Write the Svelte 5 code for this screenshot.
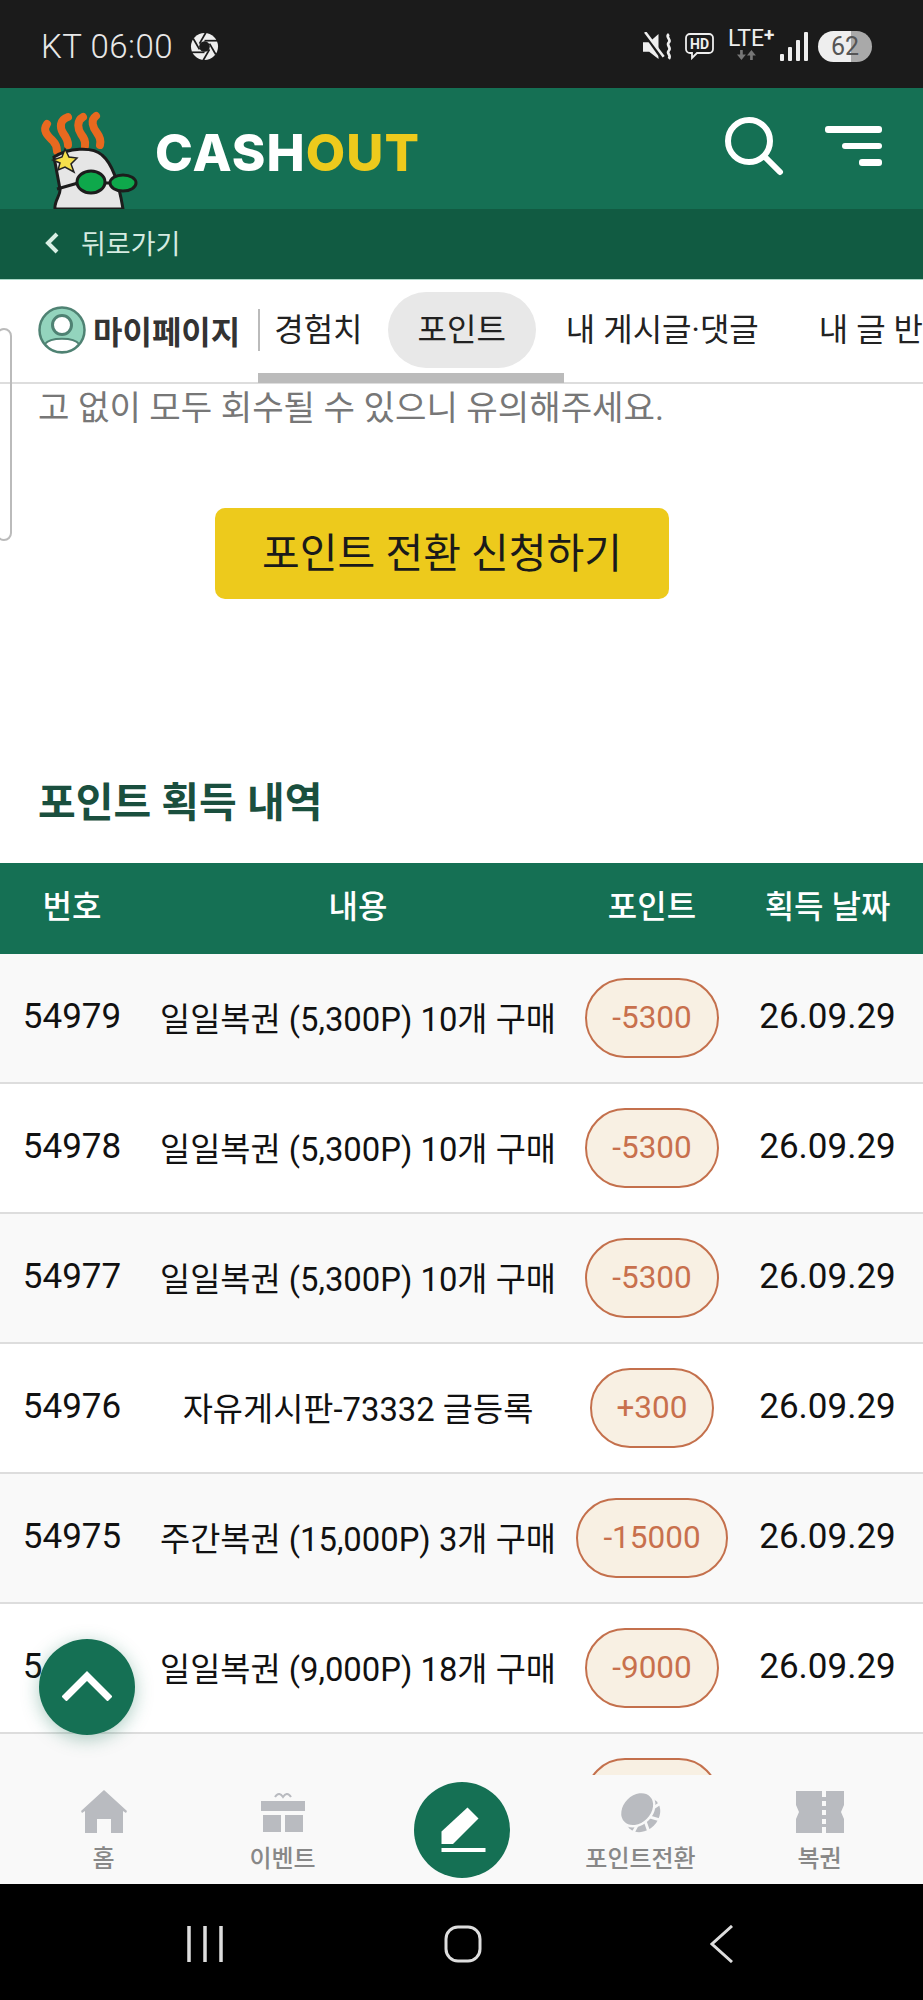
<script>
  const rows = [
    { no: '54979', text: '일일복권 (5,300P) 10개 구매', point: '-5300', date: '26.09.29' },
    { no: '54978', text: '일일복권 (5,300P) 10개 구매', point: '-5300', date: '26.09.29' },
    { no: '54977', text: '일일복권 (5,300P) 10개 구매', point: '-5300', date: '26.09.29' },
    { no: '54976', text: '자유게시판-73332 글등록', point: '+300', date: '26.09.29' },
    { no: '54975', text: '주간복권 (15,000P) 3개 구매', point: '-15000', date: '26.09.29' },
    { no: '54974', text: '일일복권 (9,000P) 18개 구매', point: '-9000', date: '26.09.29' },
    { no: '', text: '', point: '-5300', date: '' }
  ];
  const blades = [0, 60, 120, 180, 240, 300];
</script>

<div class="screen">
  <div class="status">
    <span class="clock">KT 06:00</span>
    <svg class="aperture" viewBox="0 0 30 30">
      <circle cx="15" cy="15" r="14" fill="#eee" />
      <circle cx="15" cy="15" r="5.5" fill="#1b1b1b" />
      {#each blades as a}
        <line x1="15" y1="9" x2="28" y2="9" stroke="#1b1b1b" stroke-width="1.8" transform="rotate({a} 15 15)" />
      {/each}
    </svg>
    <div class="status-right">
      <svg class="ico-mute" viewBox="0 0 30 28">
        <path d="M0 10h6l9-8v24l-9-7H0z" fill="#eee" />
        <path d="M1 1l17 24" stroke="#1b1b1b" stroke-width="3" />
        <path d="M2 0l18 24" stroke="#eee" stroke-width="2.5" />
        <path d="M25 2c-4 3 3 5 0 8s3 5 0 8 3 4 0 8" fill="none" stroke="#eee" stroke-width="2.6" />
      </svg>
      <svg class="ico-hd" viewBox="0 0 31 28">
        <path d="M6 2h19a4 4 0 0 1 4 4v11a4 4 0 0 1-4 4H13l-5 5v-5H6a4 4 0 0 1-4-4V6a4 4 0 0 1 4-4z" fill="none" stroke="#eee" stroke-width="1.8" />
        <text x="15.5" y="17" class="hd-text">HD</text>
      </svg>
      <div class="lte">
        <span>LTE<sup>+</sup></span>
        <svg viewBox="0 0 18 9" class="arrows">
          <path d="M4 9L0 4h2.8V0h2.4v4H8zM13 0l4 5h-2.8v4h-2.4V5H9z" fill="#777" />
        </svg>
      </div>
      <svg class="ico-signal" viewBox="0 0 28 29">
        <rect x="0" y="22" width="4" height="7" rx="1" fill="#eee" />
        <rect x="8" y="15" width="4" height="14" rx="1" fill="#eee" />
        <rect x="16" y="8" width="4" height="21" rx="1" fill="#eee" />
        <rect x="24" y="0" width="4" height="29" rx="1" fill="#eee" />
      </svg>
      <div class="battery"><span>62</span></div>
    </div>
  </div>

  <header class="top">
    <svg class="mascot" viewBox="0 0 120 104">
      <g fill="none" stroke="#e8691f" stroke-width="8" stroke-linecap="round">
        <path d="M17 19C12 26 18 31 23 36 27 40 27 43 27 46" />
        <path d="M38 12C29 15 30 23 33 28 36 32 38 35 38 40" />
        <path d="M53 12C46 16 48 24 51 29 54 33 56 36 55 41" />
        <path d="M66 11C60 15 63 23 67 28 70 32 71 36 70 40" />
      </g>
      <path d="M25 104C24 96 31 90 30 84L24 52C38 43 62 41 72 50 84 60 90 85 93 104Z" fill="#e6e6e6" stroke="#1c1c1c" stroke-width="3" />
      <polygon points="35,44 39,52 47,53 41,59 44,67 35,62 28,65 30,58 23,55 32,52" fill="#f5e04b" stroke="#222" stroke-width="1.5" />
      <path d="M27 84L48 78M74 78h6" stroke="#1c1c1c" stroke-width="3" fill="none" />
      <ellipse cx="61" cy="77" rx="14" ry="11" fill="#0ea84b" stroke="#1c1c1c" stroke-width="3" />
      <ellipse cx="93" cy="78" rx="13" ry="8" fill="#0ea84b" stroke="#1c1c1c" stroke-width="3" />
    </svg>
    <div class="brand">CASH<em>OUT</em></div>
    <svg class="search" viewBox="0 0 60 60">
      <circle cx="25" cy="25" r="21" fill="none" stroke="#fff" stroke-width="6" />
      <path d="M41 41l15 15" stroke="#fff" stroke-width="6" stroke-linecap="round" />
    </svg>
    <div class="menu"><i></i><i></i><i></i></div>
  </header>

  <div class="back">
    <svg viewBox="0 0 16 24"><path d="M13 3L4 12l9 9" fill="none" stroke="#d8efe4" stroke-width="4" /></svg>
    <span>뒤로가기</span>
  </div>

  <nav class="tabs">
    <svg class="avatar" viewBox="0 0 48 48">
      <circle cx="24" cy="24" r="22.5" fill="#93d4bd" stroke="#4f8273" stroke-width="2.5" />
      <path d="M7 38c5-7 29-7 34 0-4 5-10 8-17 8S11 43 7 38z" fill="#fff" stroke="#4f8273" stroke-width="2" />
      <circle cx="24" cy="19" r="9.5" fill="#fff" stroke="#4f8273" stroke-width="3" />
    </svg>
    <strong>마이페이지</strong>
    <span class="divider"></span>
    <span class="tab first">경험치</span>
    <span class="tab active">포인트</span>
    <span class="tab">내 게시글·댓글</span>
    <span class="tab">내 글 반응</span>
    <span class="thumb"></span>
  </nav>

  <main class="content">
    <p class="note">고 없이 모두 회수될 수 있으니 유의해주세요.</p>
    <button class="apply">포인트 전환 신청하기</button>
    <h2>포인트 획득 내역</h2>
    <div class="thead">
      <span>번호</span><span>내용</span><span>포인트</span><span>획득 날짜</span>
    </div>
    {#each rows as row}
      <div class="row">
        <span class="num">{row.no}</span>
        <span class="txt">{row.text}</span>
        <span><b class="pill">{row.point}</b></span>
        <span class="num">{row.date}</span>
      </div>
    {/each}
  </main>

  <nav class="bottom">
    <div class="item">
      <svg viewBox="0 0 48 44"><path d="M24 0L47 21l-1 2-3-2v22H31V29H17v14H5V21l-3 2-1-2z" fill="#b9bbc0" /></svg>
      <span>홈</span>
    </div>
    <div class="item">
      <svg viewBox="0 0 44 44">
        <path d="M14 7c3-5 6-3 8 0 2-3 5-5 8 0" fill="none" stroke="#b9bbc0" stroke-width="2" />
        <rect x="0" y="11" width="44" height="10" fill="#b9bbc0" />
        <rect x="2" y="25" width="18" height="17" fill="#b9bbc0" />
        <rect x="24" y="25" width="18" height="17" fill="#b9bbc0" />
      </svg>
      <span>이벤트</span>
    </div>
    <div class="item">
      <div class="write">
        <svg viewBox="-24 -24 48 48">
          <path d="M-20.5 1.5L5.5-22.5 16.5-11.5-9 14h-11.5z" fill="#fff" />
          <rect x="-20.5" y="18" width="44" height="4" fill="#fff" />
        </svg>
      </div>
    </div>
    <div class="item">
      <svg viewBox="0 0 46 46">
        <ellipse cx="25" cy="26" rx="20" ry="16" fill="#b9bbc0" transform="rotate(-45 25 26)" />
        <path d="M25 26L46 12M25 26L45 32M25 26L32 46M25 26L14 46" stroke="#f9f9f9" stroke-width="3" />
        <ellipse cx="19" cy="20" rx="20" ry="15.5" fill="#b9bbc0" stroke="#f9f9f9" stroke-width="2.5" transform="rotate(-45 19 20)" />
      </svg>
      <span>포인트전환</span>
    </div>
    <div class="item">
      <svg viewBox="0 0 48 42">
        <path d="M0 0h26v6h4V0h18v14l-3 7 3 7v14H30v-6h-4v6H0V28l3-7-3-7z" fill="#b9bbc0" />
        <path d="M28 10v5M28 19v5M28 28v5" stroke="#f9f9f9" stroke-width="4" />
      </svg>
      <span>복권</span>
    </div>
  </nav>

  <div class="softkeys">
    <svg class="k1" viewBox="0 0 36 36"><path d="M2 0v36M18 0v36M34 0v36" stroke="#ddd" stroke-width="3.5" /></svg>
    <svg class="k2" viewBox="0 0 38 38"><rect x="2" y="2" width="34" height="34" rx="12" fill="none" stroke="#ddd" stroke-width="3" /></svg>
    <svg class="k3" viewBox="0 0 24 38"><path d="M22 1L2 19l20 18" fill="none" stroke="#ddd" stroke-width="3" /></svg>
  </div>

  <div class="side"></div>
  <div class="fab">
    <svg viewBox="0 0 50 30"><path d="M2 28L25 5l23 23" fill="none" stroke="#fff" stroke-width="7" /></svg>
  </div>
</div>

<style>
  :global(body) {
    margin: 0;
    background: #fff;
  }

  .screen {
    position: relative;
    width: 923px;
    height: 2000px;
    display: flex;
    flex-direction: column;
    overflow: hidden;
    font-family: Roboto, "Noto Sans CJK KR", sans-serif;
    color: #111;
  }

  /* status bar */
  .status {
    height: 88px;
    flex: none;
    background: #1b1b1b;
    display: flex;
    align-items: center;
    padding: 4px 51px 0 41px;
    box-sizing: border-box;
    color: #e8e8e8;
  }
  .clock {
    font-size: 33px;
    font-weight: 300;
    letter-spacing: 0.5px;
  }
  .aperture {
    width: 29px;
    height: 29px;
    margin-left: 17px;
  }
  .status-right {
    margin-left: auto;
    display: flex;
    align-items: center;
  }
  .ico-mute {
    width: 31px;
    height: 29px;
  }
  .ico-hd {
    width: 31px;
    height: 28px;
    margin-left: 10px;
  }
  .hd-text {
    font-size: 14px;
    font-weight: 700;
    fill: #eee;
    text-anchor: middle;
  }
  .lte {
    margin-left: 13px;
    width: 48px;
    height: 32px;
    display: flex;
    flex-direction: column;
    align-items: flex-start;
    line-height: 22px;
    font-size: 23px;
    color: #eee;
    position: relative;
    top: -2px;
  }
  .lte sup {
    font-size: 19px;
    line-height: 0;
    vertical-align: 5px;
    font-weight: 700;
  }
  .arrows {
    width: 20px;
    height: 11px;
    margin-left: 9px;
  }
  .ico-signal {
    width: 28px;
    height: 29px;
    margin-left: 4px;
  }
  .battery {
    width: 54px;
    height: 31px;
    margin-left: 10px;
    border-radius: 16px;
    background: linear-gradient(90deg, #eee 0 33px, #a9a9a9 33px);
    display: flex;
    align-items: center;
    justify-content: center;
    font-size: 25px;
    color: #555;
  }

  /* header */
  .top {
    height: 121px;
    flex: none;
    background: #157054;
    display: flex;
    align-items: flex-start;
    overflow: hidden;
  }
  .mascot {
    width: 120px;
    height: 104px;
    margin: 17px 0 0 30px;
    flex: none;
  }
  .brand {
    margin: 35px 0 0 5px;
    font-family: Inter, "Liberation Sans", sans-serif;
    font-weight: 800;
    font-size: 51px;
    line-height: 60px;
    color: #fff;
    letter-spacing: 1.1px;
  }
  .brand em {
    font-style: normal;
    color: #edca1c;
  }
  .search {
    width: 60px;
    height: 60px;
    margin: 28px 0 0 auto;
  }
  .menu {
    width: 57px;
    margin: 38px 41px 0 41px;
    display: flex;
    flex-direction: column;
    align-items: flex-end;
    gap: 10px;
  }
  .menu i {
    display: block;
    height: 6.5px;
    border-radius: 3px;
    background: #fff;
    width: 100%;
  }
  .menu i:nth-child(2) {
    width: 40px;
  }
  .menu i:nth-child(3) {
    width: 23px;
  }

  .back {
    height: 71px;
    flex: none;
    box-sizing: border-box;
    background: #115b42;
    border-bottom: 1px solid #a9d8c6;
    display: flex;
    align-items: center;
    padding: 0 0 3px 44px;
    color: #d5ebe1;
    font-size: 27px;
  }
  .back svg {
    width: 16px;
    height: 24px;
    margin-right: 21px;
  }

  /* tabs */
  .tabs {
    position: relative;
    height: 104px;
    flex: none;
    box-sizing: border-box;
    border-bottom: 2px solid #ddd;
    display: flex;
    align-items: center;
    padding: 0 0 2px 38px;
    white-space: nowrap;
    font-size: 32px;
    color: #222;
  }
  .avatar {
    width: 48px;
    height: 48px;
    flex: none;
  }
  .tabs strong {
    margin-left: 7px;
    font-weight: 700;
    color: #333;
    font-size: 32px;
  }
  .divider {
    width: 2px;
    height: 42px;
    margin-left: 18px;
    background: #bbb;
    flex: none;
  }
  .tab {
    padding: 0 30px;
    line-height: 76px;
    flex: none;
  }
  .tab.first {
    padding: 0 25px 0 14px;
  }
  .tab.active {
    background: #e8e8e8;
    border-radius: 38px;
  }
  .thumb {
    position: absolute;
    left: 258px;
    bottom: -1px;
    width: 306px;
    height: 10px;
    background: #bbb;
  }

  /* content */
  .content {
    flex: 1;
    min-height: 0;
    overflow: hidden;
  }
  .note {
    margin: 0 0 0 38px;
    font-size: 34.2px;
    line-height: 48px;
    color: #777;
    white-space: nowrap;
  }
  .apply {
    display: block;
    width: 454px;
    height: 91px;
    margin: 76px 0 0 215px;
    padding: 0 0 8px;
    border: 0;
    border-radius: 10px;
    background: #edca1c;
    font-family: inherit;
    font-size: 41px;
    color: #1a1a1a;
  }
  h2 {
    margin: 179px 0 35px 38px;
    font-size: 41px;
    line-height: 50px;
    font-weight: 700;
    color: #1a4f3e;
  }
  .thead,
  .row {
    display: grid;
    grid-template-columns: 144px 428px 160px 191px;
    align-items: center;
    text-align: center;
  }
  .thead {
    height: 91px;
    background: #157054;
    color: #fff;
    font-size: 32px;
    font-weight: 500;
    padding-bottom: 10px;
    box-sizing: border-box;
  }
  .row {
    height: 130px;
    box-sizing: border-box;
    border-bottom: 2px solid #ddd;
    font-size: 32.8px;
    background: #fff;
    white-space: nowrap;
  }
  .row:nth-of-type(even) {
    background: #f9f9f9;
  }
  .num {
    font-size: 35px;
    margin-bottom: 4px;
  }
  .txt {
    margin-bottom: 4px;
  }
  .pill {
    display: inline-block;
    box-sizing: border-box;
    height: 80px;
    line-height: 76px;
    padding: 0 25px;
    border: 2px solid #c4704c;
    border-radius: 40px;
    background: #f8f0e3;
    color: #c8704d;
    font-weight: 400;
    font-size: 31.5px;
  }

  /* bottom nav */
  .bottom {
    height: 109px;
    flex: none;
    box-sizing: border-box;
    background: #f9f9f9;
    padding: 0 14px;
    display: grid;
    grid-template-columns: repeat(5, 1fr);
  }
  .item {
    display: flex;
    flex-direction: column;
    align-items: center;
    padding-top: 15px;
    font-size: 24px;
    font-weight: 500;
    color: #888;
    position: relative;
  }
  .item svg {
    height: 44px;
    width: 48px;
  }
  .item span {
    line-height: 30px;
    margin-top: 10px;
  }
  .write {
    width: 96px;
    height: 96px;
    margin-top: -8px;
    border-radius: 50%;
    background: #157054;
    display: flex;
    align-items: center;
    justify-content: center;
  }
  .write svg {
    width: 48px;
    height: 48px;
  }

  .softkeys {
    height: 116px;
    flex: none;
    background: #000;
    position: relative;
    display: flex;
    align-items: center;
    padding-top: 4px;
    box-sizing: border-box;
  }
  .k1 {
    width: 36px;
    height: 36px;
    margin-left: 187px;
  }
  .k2 {
    width: 38px;
    height: 38px;
    margin-left: 221px;
  }
  .k3 {
    width: 24px;
    height: 38px;
    margin-left: 228px;
  }

  .side {
    position: absolute;
    left: -4px;
    top: 328px;
    width: 12px;
    height: 209px;
    border: 2px solid #bbb;
    border-radius: 8px;
    background: transparent;
  }
  .fab {
    position: absolute;
    left: 39px;
    top: 1639px;
    width: 96px;
    height: 96px;
    border-radius: 50%;
    background: #157054;
    box-shadow: 0 4px 18px rgba(21, 112, 84, 0.35);
    display: flex;
    align-items: center;
    justify-content: center;
  }
  .fab svg {
    width: 50px;
    height: 30px;
    margin-bottom: 3px;
  }
</style>
